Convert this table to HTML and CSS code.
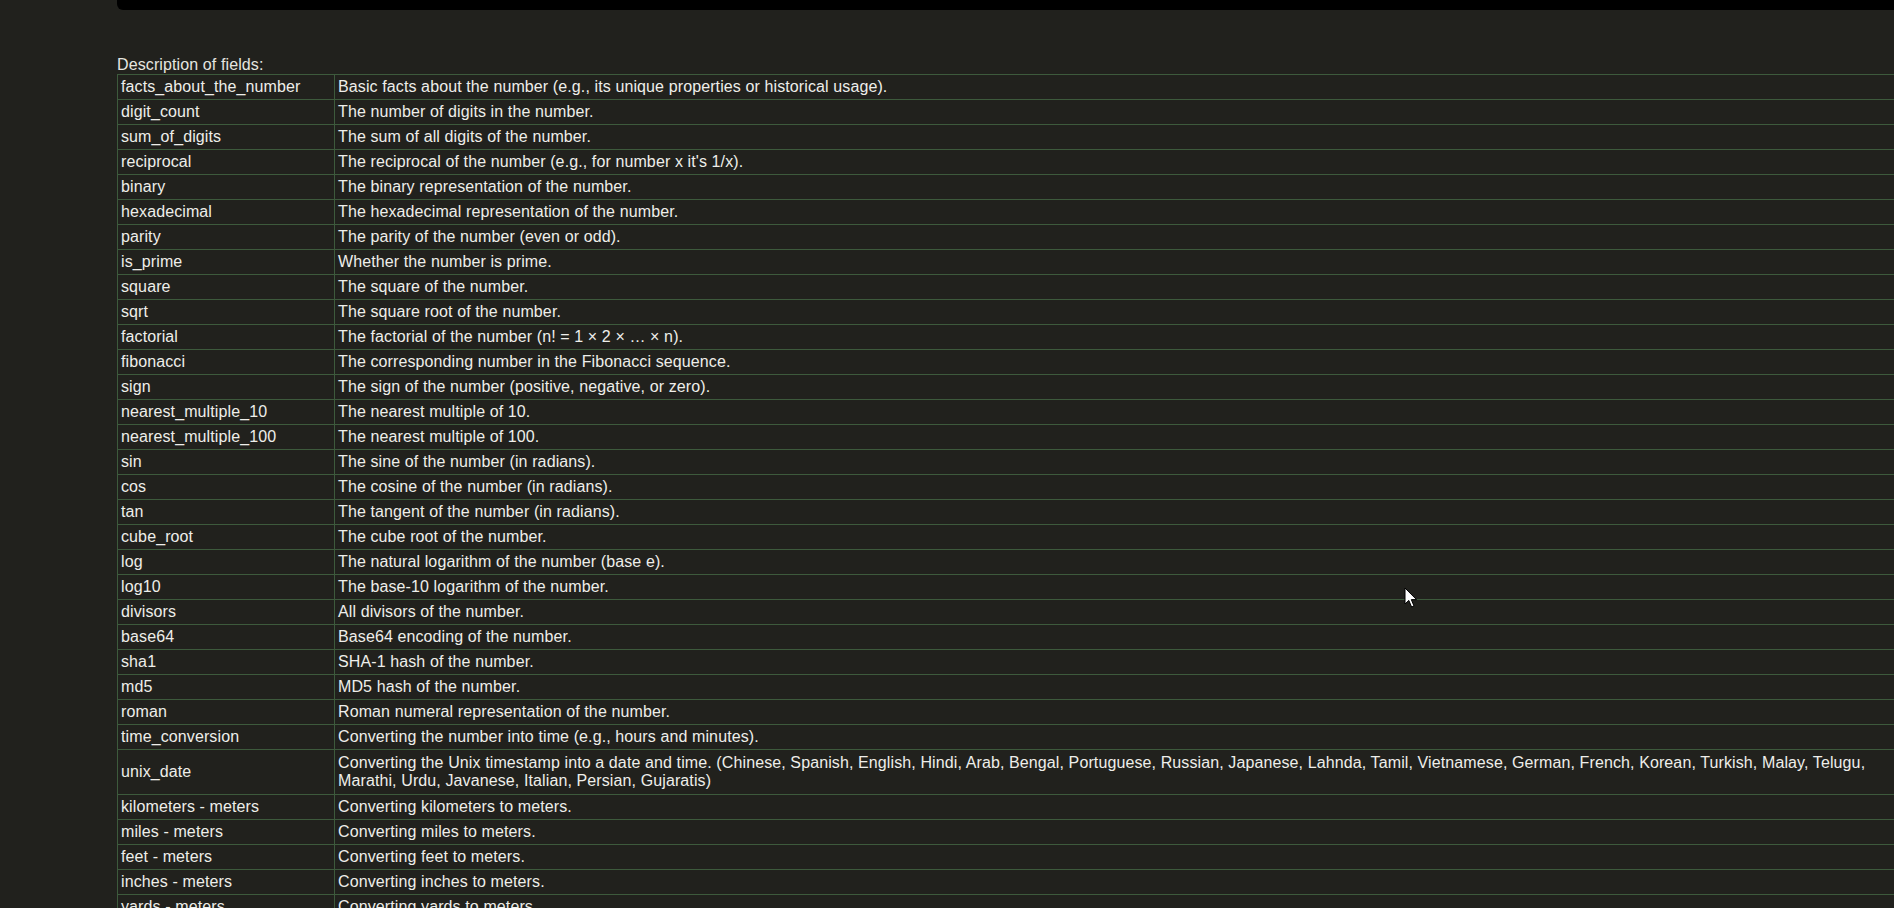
FILE: index.html
```html
<!DOCTYPE html>
<html>
<head>
<meta charset="utf-8">
<title>Description of fields</title>
<link rel="stylesheet" href="styles.css">
</head>
<body>
<div class="page">
  <div class="topbar"></div>
  <div class="caption">Description of fields:</div>
  <table class="fields">
    <tr><td class="name">facts_about_the_number</td><td>Basic facts about the number (e.g., its unique properties or historical usage).</td></tr>
    <tr><td class="name">digit_count</td><td>The number of digits in the number.</td></tr>
    <tr><td class="name">sum_of_digits</td><td>The sum of all digits of the number.</td></tr>
    <tr><td class="name">reciprocal</td><td>The reciprocal of the number (e.g., for number x it's 1/x).</td></tr>
    <tr><td class="name">binary</td><td>The binary representation of the number.</td></tr>
    <tr><td class="name">hexadecimal</td><td>The hexadecimal representation of the number.</td></tr>
    <tr><td class="name">parity</td><td>The parity of the number (even or odd).</td></tr>
    <tr><td class="name">is_prime</td><td>Whether the number is prime.</td></tr>
    <tr><td class="name">square</td><td>The square of the number.</td></tr>
    <tr><td class="name">sqrt</td><td>The square root of the number.</td></tr>
    <tr><td class="name">factorial</td><td>The factorial of the number (n! = 1 × 2 × … × n).</td></tr>
    <tr><td class="name">fibonacci</td><td>The corresponding number in the Fibonacci sequence.</td></tr>
    <tr><td class="name">sign</td><td>The sign of the number (positive, negative, or zero).</td></tr>
    <tr><td class="name">nearest_multiple_10</td><td>The nearest multiple of 10.</td></tr>
    <tr><td class="name">nearest_multiple_100</td><td>The nearest multiple of 100.</td></tr>
    <tr><td class="name">sin</td><td>The sine of the number (in radians).</td></tr>
    <tr><td class="name">cos</td><td>The cosine of the number (in radians).</td></tr>
    <tr><td class="name">tan</td><td>The tangent of the number (in radians).</td></tr>
    <tr><td class="name">cube_root</td><td>The cube root of the number.</td></tr>
    <tr><td class="name">log</td><td>The natural logarithm of the number (base e).</td></tr>
    <tr><td class="name">log10</td><td>The base-10 logarithm of the number.</td></tr>
    <tr><td class="name">divisors</td><td>All divisors of the number.</td></tr>
    <tr><td class="name">base64</td><td>Base64 encoding of the number.</td></tr>
    <tr><td class="name">sha1</td><td>SHA-1 hash of the number.</td></tr>
    <tr><td class="name">md5</td><td>MD5 hash of the number.</td></tr>
    <tr><td class="name">roman</td><td>Roman numeral representation of the number.</td></tr>
    <tr><td class="name">time_conversion</td><td>Converting the number into time (e.g., hours and minutes).</td></tr>
    <tr><td class="name">unix_date</td><td class="tall">Converting the Unix timestamp into a date and time. (Chinese, Spanish, English, Hindi, Arab, Bengal, Portuguese, Russian, Japanese, Lahnda, Tamil, Vietnamese, German, French, Korean, Turkish, Malay, Telugu, Marathi, Urdu, Javanese, Italian, Persian, Gujaratis)</td></tr>
    <tr><td class="name">kilometers - meters</td><td>Converting kilometers to meters.</td></tr>
    <tr><td class="name">miles - meters</td><td>Converting miles to meters.</td></tr>
    <tr><td class="name">feet - meters</td><td>Converting feet to meters.</td></tr>
    <tr><td class="name">inches - meters</td><td>Converting inches to meters.</td></tr>
    <tr><td class="name">yards - meters</td><td>Converting yards to meters.</td></tr>
    <tr><td class="name">nautical miles - meters</td><td>Converting nautical miles to meters.</td></tr>
  </table>
</div>
<svg class="cursor" width="14" height="22" viewBox="0 0 14 22" aria-hidden="true">
  <path d="M1 1 L1 17 L4.8 13.4 L7.6 20 L10 19 L7.3 12.6 L12.5 12.6 Z" fill="#ffffff" stroke="#000000" stroke-width="1" stroke-linejoin="round"/>
</svg>
</body>
</html>
```

FILE: styles.css
```css
html, body {
  margin: 0;
  padding: 0;
  background: #21211d;
  overflow: hidden;
}

body {
  font-family: "Liberation Sans", Arial, sans-serif;
  font-size: 16px;
  letter-spacing: 0.11px;
  color: #eeeeea;
}

.page {
  margin-left: 117px;
  width: 1800px;
}

.topbar {
  height: 10px;
  background: #000000;
  border-bottom-left-radius: 6px;
  margin-bottom: 46px;
}

.caption {
  line-height: 18px;
  color: #e6e6e0;
}

.fields {
  width: 1800px;
  border-collapse: collapse;
  table-layout: fixed;
}

.fields td {
  border: 1px solid #3d5a3c;
  padding: 3px 3px;
  line-height: 18px;
  vertical-align: middle;
}

.fields td.tall {
  padding-top: 4px;
  padding-bottom: 4px;
}

.fields td.name {
  width: 210px;
}

.cursor {
  position: absolute;
  left: 1404px;
  top: 587px;
}
```
